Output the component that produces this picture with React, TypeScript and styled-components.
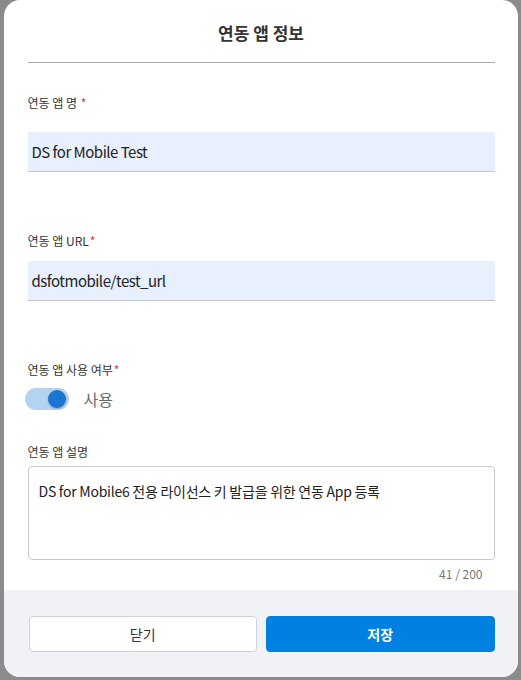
import React, { useState } from "react";
import styled, { createGlobalStyle } from "styled-components";

const GlobalStyle = createGlobalStyle`
  html, body {
    margin: 0;
    padding: 0;
    background: #8b8b8b;
  }
  * {
    box-sizing: border-box;
  }
  body {
    font-family: "Noto Sans CJK KR", "Noto Sans", sans-serif;
    color: #333;
  }
`;

const Backdrop = styled.div`
  width: 521px;
  height: 680px;
  display: flex;
  justify-content: center;
  align-items: flex-start;
`;

const Dialog = styled.div`
  width: 514px;
  height: 677px;
  background: #fff;
  border-radius: 16px;
  overflow: hidden;
  display: flex;
  flex-direction: column;
`;

const Header = styled.div`
  padding: 20px 23px 0 24px;
`;

const Title = styled.h2`
  margin: 0;
  font-size: 17px;
  line-height: 26px;
  font-weight: 700;
  text-align: center;
  color: #333;
`;

const Divider = styled.hr`
  margin: 16px 0 0;
  border: none;
  border-top: 1px solid #a9a9a9;
`;

const Body = styled.div`
  flex: 1;
  padding: 31px 23px 0 24px;
  display: flex;
  flex-direction: column;
`;

const Field = styled.div<{ $gap?: number }>`
  display: flex;
  flex-direction: column;
  margin-bottom: ${(p) => p.$gap ?? 0}px;
`;

const Label = styled.label<{ $space?: number }>`
  font-size: 12px;
  line-height: 18px;
  color: #333;
  margin-bottom: ${(p) => p.$space ?? 6}px;
`;

const Required = styled.span`
  color: #e53935;
  margin-left: 1px;
`;

const TextInput = styled.input`
  height: 40px;
  border: none;
  border-bottom: 1px solid #c3c7cf;
  background: #e8f0fe;
  padding: 0 4px;
  font-family: inherit;
  font-size: 15px;
  letter-spacing: -0.5px;
  color: #222;
  outline: none;
`;

const ToggleRow = styled.div`
  display: flex;
  align-items: center;
  margin-left: -3px;
  gap: 15px;
`;

const Track = styled.button<{ $on: boolean }>`
  position: relative;
  width: 44px;
  height: 22px;
  border: none;
  padding: 0;
  border-radius: 11px;
  background: ${(p) => (p.$on ? "#b4d3f3" : "#cfcfcf")};
  cursor: pointer;
`;

const Thumb = styled.span<{ $on: boolean }>`
  position: absolute;
  top: 2px;
  left: ${(p) => (p.$on ? "23px" : "3px")};
  width: 18px;
  height: 18px;
  border-radius: 50%;
  background: ${(p) => (p.$on ? "#1a76d2" : "#fafafa")};
  box-shadow: 0 1px 2px rgba(0, 0, 0, 0.25);
`;

const ToggleText = styled.span`
  font-size: 16px;
  color: #6b6b6b;
`;

const TextArea = styled.textarea`
  height: 94px;
  border: 1px solid #c8c8c8;
  border-radius: 4px;
  padding: 14px 10px;
  font-family: inherit;
  font-size: 14px;
  letter-spacing: -0.25px;
  line-height: 20px;
  color: #222;
  resize: none;
  outline: none;
`;

const Counter = styled.div`
  text-align: right;
  font-size: 12px;
  line-height: 16px;
  color: #777;
  padding-right: 12px;
  margin-top: 6px;
`;

const Footer = styled.div`
  height: 87px;
  background: #f1f2f6;
  padding: 26px 23px 0 25px;
  display: grid;
  grid-template-columns: 1fr 1fr;
  column-gap: 9px;
  align-items: start;
`;

const Button = styled.button<{ $primary?: boolean }>`
  height: 36px;
  border-radius: 4px;
  font-family: inherit;
  font-size: 14px;
  font-weight: ${(p) => (p.$primary ? 700 : 400)};
  color: ${(p) => (p.$primary ? "#fff" : "#333")};
  background: ${(p) => (p.$primary ? "#0081e1" : "#fff")};
  border: 1px solid ${(p) => (p.$primary ? "#0081e1" : "#cfd2d8")};
  cursor: pointer;
`;

export default function App() {
  const [enabled, setEnabled] = useState(true);
  const desc = "DS for Mobile6 전용 라이선스 키 발급을 위한 연동 App 등록";
  return (
    <>
      <GlobalStyle />
      <Backdrop>
        <Dialog>
          <Header>
            <Title>연동 앱 정보</Title>
            <Divider />
          </Header>
          <Body>
            <Field $gap={60}>
              <Label $space={20}>
                연동 앱 명 <Required>*</Required>
              </Label>
              <TextInput defaultValue="DS for Mobile Test" />
            </Field>
            <Field $gap={60}>
              <Label $space={11}>
                연동 앱 URL<Required>*</Required>
              </Label>
              <TextInput defaultValue="dsfotmobile/test_url" />
            </Field>
            <Field $gap={32}>
              <Label $space={8}>
                연동 앱 사용 여부<Required>*</Required>
              </Label>
              <ToggleRow>
                <Track $on={enabled} onClick={() => setEnabled(!enabled)}>
                  <Thumb $on={enabled} />
                </Track>
                <ToggleText>사용</ToggleText>
              </ToggleRow>
            </Field>
            <Field>
              <Label $space={5}>연동 앱 설명</Label>
              <TextArea defaultValue={desc} />
              <Counter>{desc.length} / 200</Counter>
            </Field>
          </Body>
          <Footer>
            <Button>닫기</Button>
            <Button $primary>저장</Button>
          </Footer>
        </Dialog>
      </Backdrop>
    </>
  );
}
